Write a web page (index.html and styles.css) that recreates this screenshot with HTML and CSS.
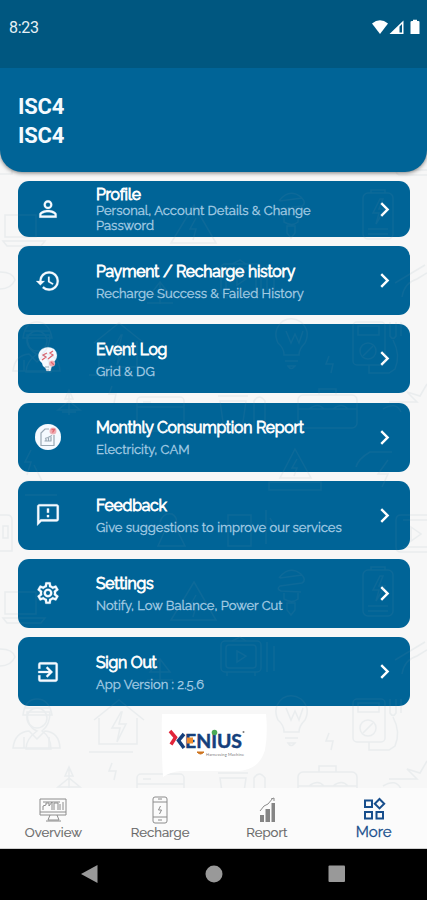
FILE: index.html
```html
<!DOCTYPE html>
<html lang="en">

<head>
    <meta charset="UTF-8">
    <meta name="viewport" content="width=device-width, initial-scale=1.0">
    <title>More</title>
    <link rel="stylesheet" href="styles.css">
</head>

<body>
    <div class="status-bar">
        <span class="time">8:23</span>
        <svg class="status-icons" viewBox="0 0 50 16">
            <path d="M1 4.5Q9 -2 17 4.5L9 15z" />
            <path d="M18.5 15L32.5 1.500V15zM28.500 7.500V13.500H31V5z" fill-rule="evenodd" />
            <path d="M39.500 15V3Q39.500 2 41 2H42V.7H46V2H47.500Q48.500 2 48.500 3V15z" />
        </svg>
    </div>

    <main>
        <svg class="doodles" viewBox="0 167 427 621">
            <defs>
                <g id="tile">
                    <!-- battery -->
                    <rect x="363" y="193" width="30" height="46" rx="5" />
                    <path d="M371 193v-3h14v3M380 199l-7 14h6l-3 11 9-15h-6l4-10zM368 229h20M368 234h20" />
                    <!-- spiral lamp -->
                    <path d="M279 201q10-13 22-4 6 6 1 9l-22 3q-4 3 1 5l20 1M280 201l22-3M284 216v6q8 5 14 0v-6M287 226v7l4 5 4-5v-7z" />
                    <!-- bulb -->
                    <path d="M284 355q0-7-6-12-6-13 5-22 9-5 18 1 10 9 4 21-6 6-6 12zM286 331l5 12 4-9 4 9 4-12M285 361h13M288 366q3 5 7 0z" />
                    <!-- multimeter -->
                    <rect x="353" y="322" width="32" height="43" rx="4" />
                    <rect x="358" y="326" width="21" height="9" />
                    <circle cx="368" cy="351" r="8" />
                    <path d="M363 356l10-10M390 322v14q3 5 6 0v-14M401 322v14M393 340q8 15 2 29l-6 4h-20v-8" />
                    <!-- tv -->
                    <rect x="221" y="264" width="40" height="31" rx="4" />
                    <rect x="226" y="268" width="30" height="23" rx="3" />
                    <path d="M237 274l9 5-9 6zM227 295v4M255 295v4M267 265v30M274 269v25M232 264l8-4 6 4" />
                    <!-- warning signs -->
                    <path d="M295 449l16 29h-31zM297 459l-5 9h5l-3 8M269 482h52v8h-52z" />
                    <path d="M194 205l22 38h-45zM196 218l-6 11h6l-3 11" />
                    <!-- house -->
                    <path d="M94 343l25-20 25 20M99 341v26h38v-26M89 375h44M121 335l-9 16h8l-3 14 9-18h-7l3-12z" />
                    <path d="M112 386l-3 8h7l-2 9M329 356l-3 8h7l-2 9" />
                    <!-- plant -->
                    <path d="M69 390v25M69 401l-11 9h22zM69 390l-4 9h8zM62 412h14M160 282l-10 13h20zM160 282v22M147 303h26" />
                    <!-- toolbox -->
                    <rect x="298" y="395" width="59" height="33" rx="5" />
                    <path d="M319 395v-6h17v6M298 409h59M309 409q9-7 15 0M333 409q9-7 15 0" />
                    <!-- worker -->
                    <circle cx="37" cy="341" r="10" />
                    <path d="M23 338q2-16 14-16t15 16zM13 371q2-16 16-17l8 8 8-8q14 1 15 17zM24 360v11M49 360v11" />
                    <!-- monitor and plug -->
                    <path d="M5 215h31v22H5zM3 241h42l-4 5H7zM0 272q13 0 15 8-4 9-15 9M24 331h25M27 335q0 15 10 19-11 8-11 18h25q0-12-9-18 8-6 8-19z" />
                    <path d="M0 515h7q5 0 5 5v31H0M3 526h5v12H3zM427 515h-26q-5 0-5 5v27q0 5 5 5h26M403 520h24M403 547h24M411 527l10 7-10 7z" />
                    <!-- socket box, mug -->
                    <rect x="137" y="397" width="47" height="34" rx="4" />
                    <path d="M137 407h47M143 402h8M218 396h30M220 401l4 28h18l4-28zM254 430v-29q5-8 11 0v29" />
                    <path d="M389 402h28l-10-10 13 4 7-12M383 409q13-8 18 3M402 297q2-14 15-18l10-6M395 283l30-18" />
                    <path d="M31 450l-6 12h6l-4 13M25 495h32M34 465l8 16h-16M388 460l-10 14h10l-6 13M392 452h-22q-12 7-14 15" />
                    <path d="M160 522q3-10 12-8 7 4 3 12l10 20h-27l9-20M228 515h23v31h-23zM266 510v34M270 518l5 9" />
                </g>
            </defs>
            <use href="#tile" />
            <use href="#tile" y="377" />
            <use href="#tile" y="-377" />
        </svg>

        <header>
            <h1>ISC4</h1>
            <h1>ISC4</h1>
        </header>

        <div class="menu">
            <a class="card short">
                <svg class="icon" viewBox="0 0 24 24"><path d="M12 5.900a2.100 2.100 0 1 1 0 4.200 2.100 2.100 0 0 1 0-4.200m0 9c2.970 0 6.100 1.460 6.100 2.100v1.100H5.900V17c0-.64 3.130-2.100 6.100-2.100M12 4C9.790 4 8 5.790 8 8s1.790 4 4 4 4-1.790 4-4-1.790-4-4-4zm0 9c-2.670 0-8 1.340-8 4v3h16v-3c0-2.660-5.330-4-8-4z" /></svg>
                <div class="text">
                    <h2>Profile</h2>
                    <p>Personal, Account Details &amp; Change<br>Password</p>
                </div>
                <svg class="chevron" viewBox="0 0 24 24"><path d="M10 6 8.590 7.410 13.170 12l-4.580 4.590L10 18l6-6z" /></svg>
            </a>
            <a class="card">
                <svg class="icon" viewBox="0 0 24 24"><path d="M13 3a9 9 0 0 0-9 9H1l3.890 3.890.07.14L9 12H6c0-3.870 3.130-7 7-7s7 3.130 7 7-3.130 7-7 7c-1.930 0-3.680-.79-4.940-2.060l-1.420 1.420A8.954 8.954 0 0 0 13 21a9 9 0 0 0 0-18zm-1 5v5l4.280 2.540.72-1.210-3.500-2.080V8z" /></svg>
                <div class="text">
                    <h2>Payment / Recharge history</h2>
                    <p>Recharge Success &amp; Failed History</p>
                </div>
                <svg class="chevron" viewBox="0 0 24 24"><path d="M10 6 8.590 7.410 13.170 12l-4.580 4.590L10 18l6-6z" /></svg>
            </a>
            <a class="card">
                <svg class="icon" viewBox="0 0 26 26">
                    <path d="M8 20q0-3-3-5Q1 8 7 3q6-3.500 12 0 5 5 1.500 11-3.500 3-4 7l-1 4h-4l-1-3z" />
                    <path class="red" d="M12 7l-4 2 3 2-4 3M18 5l-3 2 3 2-5 4" />
                    <circle class="pink" cx="17" cy="17.500" r="3" />
                    <path class="red" d="M16 16l3 3" />
                    <path class="grey" d="M10 21h4M11 24h3" />
                </svg>
                <div class="text">
                    <h2>Event Log</h2>
                    <p>Grid &amp; DG</p>
                </div>
                <svg class="chevron" viewBox="0 0 24 24"><path d="M10 6 8.590 7.410 13.170 12l-4.580 4.590L10 18l6-6z" /></svg>
            </a>
            <a class="card">
                <svg class="icon" viewBox="0 0 26 26">
                    <circle cx="13" cy="13" r="13" />
                    <path class="grey" d="M14 5h-4l-4 4v12.500h13V11M9.500 17h7M10 14.500l3-1 4-2M11 17v-2M13.500 17v-3M16 17v-4" />
                    <circle class="pink" cx="18" cy="7" r="3.500" />
                    <path class="red" d="M16.500 5.500h3l-2 3" />
                </svg>
                <div class="text">
                    <h2>Monthly Consumption Report</h2>
                    <p>Electricity, CAM</p>
                </div>
                <svg class="chevron" viewBox="0 0 24 24"><path d="M10 6 8.590 7.410 13.170 12l-4.580 4.590L10 18l6-6z" /></svg>
            </a>
            <a class="card">
                <svg class="icon" viewBox="0 0 24 24"><path d="M20 2H4c-1.100 0-1.990.9-1.990 2L2 22l4-4h14c1.100 0 2-.9 2-2V4c0-1.100-.9-2-2-2zm0 14H5.170L4 17.170V4h16v12zm-9-4h2v2h-2zm0-6h2v4h-2z" /></svg>
                <div class="text">
                    <h2>Feedback</h2>
                    <p>Give suggestions to improve our services</p>
                </div>
                <svg class="chevron" viewBox="0 0 24 24"><path d="M10 6 8.590 7.410 13.170 12l-4.580 4.590L10 18l6-6z" /></svg>
            </a>
            <a class="card">
                <svg class="icon" viewBox="0 0 24 24"><path d="M19.430 12.980c.04-.32.07-.64.07-.98s-.03-.66-.07-.98l2.110-1.650c.19-.15.24-.42.12-.64l-2-3.460c-.12-.22-.39-.3-.61-.22l-2.490 1c-.52-.4-1.080-.73-1.690-.98l-.38-2.650A.488.488 0 0 0 14 2h-4c-.25 0-.46.18-.49.42l-.38 2.650c-.61.25-1.170.59-1.690.98l-2.490-1c-.23-.09-.49 0-.61.22l-2 3.460c-.13.22-.07.49.12.64l2.110 1.650c-.04.32-.07.65-.07.98s.03.66.07.98l-2.110 1.650c-.19.15-.24.42-.12.64l2 3.460c.12.22.39.3.61.22l2.490-1c.52.4 1.080.73 1.690.98l.38 2.650c.03.24.24.42.49.42h4c.25 0 .46-.18.49-.42l.38-2.650c.61-.25 1.170-.59 1.690-.98l2.490 1c.23.09.49 0 .61-.22l2-3.460c.12-.22.07-.49-.12-.64zm-1.980-1.710c.04.31.05.52.05.73s-.02.43-.05.73l-.14 1.130.89.7 1.080.84-.7 1.210-1.270-.51-1.040-.42-.9.680c-.43.32-.84.56-1.250.73l-1.060.43-.16 1.130-.2 1.350h-1.400l-.35-2.480-1.060-.43c-.43-.18-.83-.41-1.230-.71l-.91-.7-1.060.43-1.270.51-.7-1.210 1.080-.84.89-.7-.14-1.130c-.03-.31-.05-.54-.05-.74s.02-.43.05-.73l.14-1.130-.89-.7-1.080-.84.7-1.210 1.270.51 1.040.42.900-.68c.43-.32.84-.56 1.250-.73l1.060-.43.16-1.130.2-1.350h1.390l.35 2.480 1.060.43c.43.18.83.41 1.230.71l.91.7 1.060-.43 1.270-.51.7 1.210-1.070.85-.89.7zM12 8a4 4 0 1 0 0 8 4 4 0 0 0 0-8zm0 6a2 2 0 1 1 0-4 2 2 0 0 1 0 4z" /></svg>
                <div class="text">
                    <h2>Settings</h2>
                    <p>Notify, Low Balance, Power Cut</p>
                </div>
                <svg class="chevron" viewBox="0 0 24 24"><path d="M10 6 8.590 7.410 13.170 12l-4.580 4.590L10 18l6-6z" /></svg>
            </a>
            <a class="card">
                <svg class="icon" viewBox="0 0 24 24"><path d="M10.090 15.590 11.500 17l5-5-5-5-1.410 1.410L12.670 11H3v2h9.670zM19 3H5a2 2 0 0 0-2 2v4h2V5h14v14H5v-4H3v4a2 2 0 0 0 2 2h14c1.100 0 2-.9 2-2V5c0-1.100-.9-2-2-2z" /></svg>
                <div class="text">
                    <h2>Sign Out</h2>
                    <p>App Version : 2.5.6</p>
                </div>
                <svg class="chevron" viewBox="0 0 24 24"><path d="M10 6 8.590 7.410 13.170 12l-4.580 4.590L10 18l6-6z" /></svg>
            </a>
        </div>

        <svg class="logo" viewBox="0 0 108 64">
            <path fill="#fff" d="M2 0H106Q108 20 105 36 99 56 79 57L20 57Q10 58 3 63Q1 30 2 0z" />
            <path d="M10 17l5.500 6.500-4.500 7" fill="none" stroke="#e1253a" stroke-width="3.500" />
            <path d="M24 20l-5.500 6.500L24 34" fill="none" stroke="#153f7c" stroke-width="3.500" />
            <text x="25" y="34" textLength="57" lengthAdjust="spacingAndGlyphs">ENIUS</text>
            <rect x="27" y="23.500" width="6" height="6" fill="#ef8b2c" />
            <circle cx="54.500" cy="18.500" r="2.800" fill="#4aaa55" />
            <path d="M37 38h7q-3.500 4-7 0" fill="#ce741e" stroke="#ce741e" />
            <text class="tagline" x="46" y="42" textLength="38">Harnessing Machine</text>
            <circle cx="83.500" cy="18" r="1" fill="#777" />
        </svg>
    </main>

    <nav class="tabs">
        <a>
            <svg viewBox="0 0 28 28">
                <path d="M1 3h26v16H1zM1 16h26M11 19l-2 5h11l-2-5M7 25h15M4 14v-4l3-1v-2h3v3l3-4v8M15 14V7h4v7M21 14V8M24 14V6M4 6h17" />
            </svg>
            <span>Overview</span>
        </a>
        <a>
            <svg viewBox="0 0 28 28">
                <path d="M9 1h10q2 0 2 2v22q0 2-2 2H9q-2 0-2-2V3q0-2 2-2zM7 6h14M7 21h14M12 3h4M14.500 10l-2 4h3l-2 4M12 24h4" />
            </svg>
            <span>Recharge</span>
        </a>
        <a>
            <svg viewBox="0 0 28 28">
                <path class="bars" d="M7 19h4v7H7zM12.500 13H17v13h-4.500zM18.500 7H22v19h-3.500z" />
                <path d="M7 15l4-5 4-2 5-6M18 3l3-1v3" />
            </svg>
            <span>Report</span>
        </a>
        <a class="active">
            <svg viewBox="0 0 28 28">
                <path d="M5 4.500h7v6.500H5zM5 16h7v6.500H5zM16.500 16h6.500v6.500h-6.500zM19.500 3l4.700 4.700-4.700 4.700L14.800 7.700z" />
            </svg>
            <span>More</span>
        </a>
    </nav>

    <div class="android-nav">
        <svg viewBox="0 0 427 50">
            <path d="M81 25L97.500 16V34z" />
            <circle cx="214" cy="25" r="8.500" />
            <rect x="328.500" y="16.500" width="16.500" height="16.500" rx="1" />
        </svg>
    </div>
</body>

</html>
```
FILE: styles.css
```css
* {
    box-sizing: border-box;
}

body {
    margin: 0;
    width: 427px;
    height: 900px;
    display: flex;
    flex-direction: column;
    overflow: hidden;
    font-family: Raleway, Lato, sans-serif;
    background: #f7f7f7;
}

h1, h2, p {
    margin: 0;
}

.status-bar {
    height: 68px;
    flex: none;
    display: flex;
    justify-content: space-between;
    align-items: flex-start;
    padding: 19px 6px 0 9px;
    background: #005780;
    color: #e6f0f6;
}

.time {
    font: 16px/18px Roboto, sans-serif;
    letter-spacing: -0.3px;
}

.status-icons {
    width: 50px;
    height: 16px;
    fill: #fff;
}

main {
    position: relative;
    height: 720px;
    flex: none;
    display: flex;
    flex-direction: column;
    overflow: hidden;
}

header {
    height: 104px;
    flex: none;
    padding: 24px 18px 0;
    background: #006497;
    border-radius: 0 0 22px 22px;
    box-shadow: 0 1px 4px rgba(0, 0, 0, 0.5);
    position: relative;
    z-index: 2;
}

h1 {
    font: 700 22px/29px Roboto, sans-serif;
    letter-spacing: -0.2px;
    color: #f4faff;
}

.doodles {
    position: absolute;
    z-index: 1;
    left: 0;
    top: 99px;
    width: 427px;
    height: 621px;
    fill: none;
    stroke: #7d99aa;
    stroke-width: 1.5;
    opacity: 0.1;
    pointer-events: none;
}

.menu {
    display: flex;
    flex-direction: column;
    gap: 9.2px;
    padding: 9px 17px 0 18px;
}

.card {
    height: 69px;
    display: flex;
    align-items: center;
    padding: 0 11px 0 17px;
    border-radius: 11px;
    background: #006497;
    color: #fff;
}

.card.short {
    height: 56px;
}

.icon {
    width: 26px;
    height: 26px;
    fill: #f5faff;
    stroke: #f5faff;
    stroke-width: 0.2;
}

.icon .red {
    fill: none;
    stroke: #df6670;
    stroke-width: 1.3;
}

.icon .pink {
    fill: #efabb1;
}

.icon .grey {
    fill: none;
    stroke: #99a8b4;
    stroke-width: 1.2;
}

.text {
    flex: 1;
    margin-left: 35px;
    padding-top: 3px;
    white-space: nowrap;
}

.card h2 {
    font-size: 15.8px;
    line-height: 20px;
    font-weight: 400;
    letter-spacing: -0.25px;
    -webkit-text-stroke: 0.8px #fff;
}

.card p {
    margin-top: 3px;
    font-size: 13px;
    line-height: 18px;
    color: #a5cce4;
    -webkit-text-stroke: 0.3px #a5cce4;
}

.card.short .text {
    padding-top: 1px;
}

.card.short h2 {
    line-height: 17px;
}

.card.short p {
    margin-top: 0;
    line-height: 15.5px;
}

.chevron {
    width: 29px;
    height: 29px;
    fill: #fff;
}

.logo {
    width: 108px;
    height: 64px;
    flex: none;
    margin: 8px 0 0 160px;
    position: relative;
    z-index: 2;
}

.logo text {
    font: 700 19px Lato, sans-serif;
    fill: #153f7c;
    stroke: #153f7c;
    stroke-width: 0.5;
}

.logo .tagline {
    font-size: 4px;
    font-weight: 400;
    fill: #777;
    stroke: none;
}

.tabs {
    height: 61px;
    flex: none;
    display: flex;
    background: #fbfbfb;
    border-bottom: 1px solid #d0d0d0;
}

.tabs a {
    flex: 1;
    display: flex;
    flex-direction: column;
    align-items: center;
    padding-top: 8px;
    font-size: 13.2px;
    line-height: 17px;
    color: #666;
    -webkit-text-stroke: 0.2px #666;
}

.tabs svg {
    width: 28px;
    height: 28px;
    fill: none;
    stroke: #8c8c8c;
    stroke-width: 1;
}

.tabs .bars {
    fill: #858585;
    stroke: none;
}

.tabs .active {
    font-size: 15px;
    line-height: 16px;
    color: #174e8c;
    -webkit-text-stroke: 0.3px #174e8c;
}

.tabs .active svg {
    stroke: #174e8c;
    stroke-width: 2;
}

.android-nav {
    height: 51px;
    flex: none;
    background: #000;
}

.android-nav svg {
    display: block;
    width: 427px;
    height: 50px;
    fill: #999;
}
```
